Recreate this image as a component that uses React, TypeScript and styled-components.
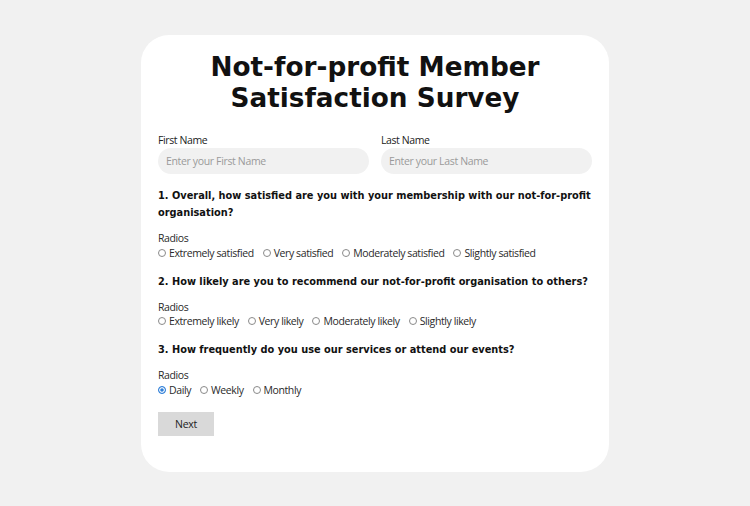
import React from 'react';
import styled, { createGlobalStyle } from 'styled-components';

const GlobalStyle = createGlobalStyle`
  html, body {
    margin: 0;
    padding: 0;
    background: #f1f1f1;
  }
`;

const Page = styled.div`
  min-height: 506px;
  padding: 35px 0 36px;
  box-sizing: border-box;
  display: flex;
  justify-content: center;
  align-items: flex-start;
`;

const Card = styled.form`
  width: 468px;
  box-sizing: border-box;
  background: #fff;
  border-radius: 28px;
  padding: 17px 17px 36px;
  font-family: 'Open Sans', sans-serif;
  color: #222;
`;

const Title = styled.h1`
  margin: 0 0 18px;
  text-align: center;
  font-family: 'DejaVu Sans', sans-serif;
  font-weight: 700;
  font-size: 26.3px;
  line-height: 31px;
  color: #111;
`;

const NameRow = styled.div`
  display: grid;
  grid-template-columns: 1fr 1fr;
  gap: 12px;
  margin-bottom: 13px;
`;

const Field = styled.label`
  display: flex;
  flex-direction: column;
`;

const FieldLabel = styled.span`
  font-size: 10.5px;
  letter-spacing: -0.4px;
  line-height: 16px;
  color: #222;
`;

const TextInput = styled.input`
  height: 26px;
  border: none;
  border-radius: 13px;
  background: #f1f1f1;
  padding: 0 8px;
  font-family: 'Open Sans', sans-serif;
  font-size: 10.5px;
  letter-spacing: -0.35px;
  color: #222;
  outline: none;

  &::placeholder {
    color: #9a9a9a;
  }
`;

const Question = styled.fieldset`
  border: none;
  margin: 0 0 13px;
  padding: 0;
`;

const Heading = styled.h2`
  margin: 0 0 10px;
  font-family: 'DejaVu Sans', sans-serif;
  font-weight: 700;
  font-size: 9.8px;
  line-height: 17px;
  color: #111;
`;

const Legend = styled.div`
  font-size: 10.5px;
  letter-spacing: -0.4px;
  line-height: 14.5px;
  color: #2a2a2a;
`;

const Options = styled.div`
  display: flex;
  gap: 9px;
`;

const Option = styled.label`
  display: flex;
  align-items: center;
  gap: 3px;
  font-size: 10.5px;
  letter-spacing: -0.4px;
  line-height: 14px;
  color: #2a2a2a;
`;

const Radio = styled.input`
  appearance: none;
  margin: 0;
  width: 8px;
  height: 8px;
  border-radius: 50%;
  border: 1px solid #8a8a8a;
  box-sizing: border-box;
  background: #fff;

  &:checked {
    border-color: #2f7fd8;
    background: #2f7fd8;
    box-shadow: inset 0 0 0 1.2px #fff;
  }
`;

const NextButton = styled.button`
  margin-top: 2px;
  width: 56px;
  height: 24px;
  border: none;
  background: #d9d9d9;
  font-family: 'Open Sans', sans-serif;
  font-size: 10.5px;
  letter-spacing: -0.3px;
  color: #222;
`;

const questions = [
  {
    name: 'satisfaction',
    text: '1. Overall, how satisfied are you with your membership with our not-for-profit organisation?',
    options: ['Extremely satisfied', 'Very satisfied', 'Moderately satisfied', 'Slightly satisfied'],
  },
  {
    name: 'recommend',
    text: '2. How likely are you to recommend our not-for-profit organisation to others?',
    options: ['Extremely likely', 'Very likely', 'Moderately likely', 'Slightly likely'],
  },
  {
    name: 'frequency',
    text: '3. How frequently do you use our services or attend our events?',
    options: ['Daily', 'Weekly', 'Monthly'],
    checked: 'Daily',
  },
];

const App: React.FC = () => {
  return (
    <Page>
      <GlobalStyle />
      <Card onSubmit={(e) => e.preventDefault()}>
        <Title>
          Not-for-profit Member
          <br />
          Satisfaction Survey
        </Title>
        <NameRow>
          <Field>
            <FieldLabel>First Name</FieldLabel>
            <TextInput placeholder="Enter your First Name" />
          </Field>
          <Field>
            <FieldLabel>Last Name</FieldLabel>
            <TextInput placeholder="Enter your Last Name" />
          </Field>
        </NameRow>
        {questions.map((q) => (
          <Question key={q.name}>
            <Heading>{q.text}</Heading>
            <Legend>Radios</Legend>
            <Options>
              {q.options.map((opt) => (
                <Option key={opt}>
                  <Radio type="radio" name={q.name} defaultChecked={q.checked === opt} />
                  {opt}
                </Option>
              ))}
            </Options>
          </Question>
        ))}
        <NextButton type="submit">Next</NextButton>
      </Card>
    </Page>
  );
};

export default App;
